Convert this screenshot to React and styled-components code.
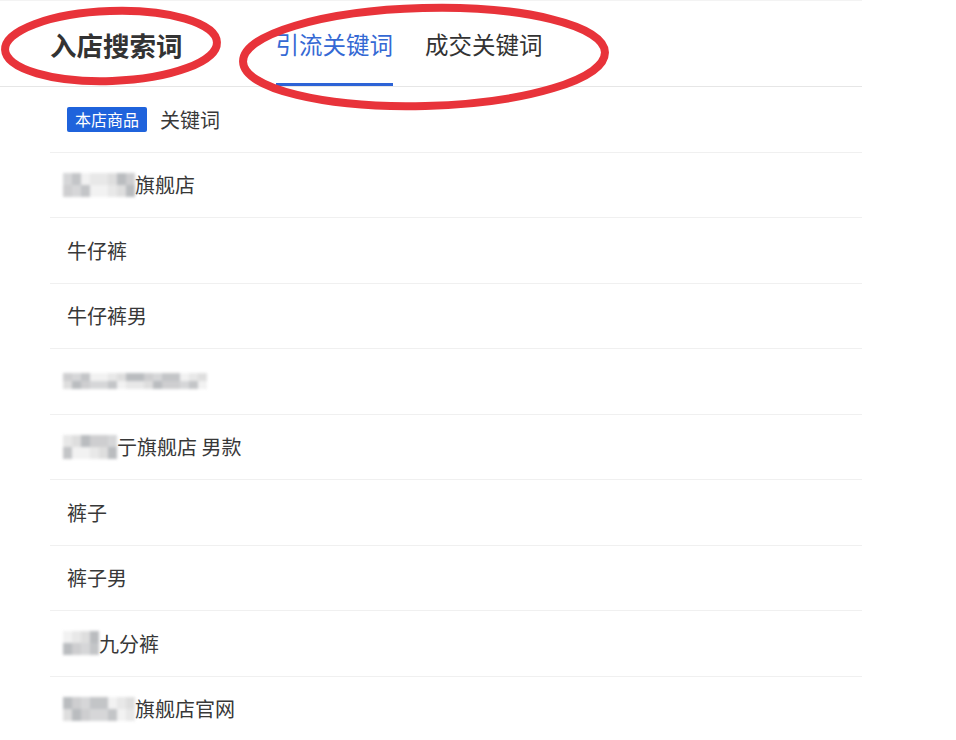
import React from 'react'
import styled, { createGlobalStyle } from 'styled-components'

const GlobalStyle = createGlobalStyle`
  html, body {
    margin: 0;
    padding: 0;
    background: #fff;
  }
  body {
    font-family: "Noto Sans CJK SC", "Noto Sans", sans-serif;
    color: #333;
  }
`

const Page = styled.div`
  position: relative;
  width: 862px;
  height: 740px;
  overflow: hidden;
  border-top: 1px solid #f3f3f3;
  box-sizing: border-box;
`

const Header = styled.header`
  display: flex;
  align-items: stretch;
  height: 85px;
  padding-left: 50px;
  border-bottom: 1px solid #e6e6e6;
`

const Title = styled.h1`
  margin: 2px 0 0;
  align-self: center;
  font-size: 26.5px;
  font-weight: 700;
  color: #333;
`

const Tabs = styled.nav`
  display: flex;
  gap: 32px;
  margin-left: 93px;
`

const Tab = styled.div`
  display: flex;
  align-items: center;
  padding-top: 4px;
  font-size: 23.5px;
  color: ${p => (p.active ? '#3569d4' : '#333')};
  border-bottom: 3px solid ${p => (p.active ? '#2d63d6' : 'transparent')};
  box-sizing: border-box;
`

const List = styled.ul`
  list-style: none;
  margin: 0;
  padding: 0 0 0 50px;
`

const Row = styled.li`
  display: flex;
  align-items: center;
  gap: 13px;
  height: 65.5px;
  box-sizing: border-box;
  padding-left: 17px;
  border-bottom: 1px solid #f0f0f0;
  font-size: 20px;
  color: #383838;
`

const Badge = styled.span`
  display: inline-flex;
  align-items: center;
  height: 25px;
  padding: 0 8px;
  border-radius: 2px;
  background: #1f63dc;
  color: #fff;
  font-size: 16px;
`

const Text = styled.span`
  display: inline-flex;
  align-items: center;
`

const Mosaic = styled.span`
  display: inline-grid;
  grid-template-columns: repeat(${p => p.cols}, 9px);
  grid-auto-rows: ${p => p.cell}px;
  margin-left: -4px;
  filter: blur(1.5px);
  opacity: 0.85;
`

const Cell = styled.span`
  background: ${p => p.shade};
`

const Marks = styled.svg`
  position: absolute;
  left: 0;
  top: 0;
  pointer-events: none;
`

const shades = ['#d9d9d9', '#c6c6c8', '#b9bbbe', '#e4e4e4', '#aeb1b5', '#cfd0d2', '#f0f0f0']

const Blur = ({ cols, rows = 2, cell = 12, seed = 1 }) => {
  const cells = []
  for (let i = 0; i < cols * rows; i++) {
    cells.push(<Cell key={i} shade={shades[(i * 3 + seed * 5 + (i % 4)) % shades.length]} />)
  }
  return (
    <Mosaic cols={cols} cell={cell}>
      {cells}
    </Mosaic>
  )
}

const rows = [
  { blur: 8, text: '旗舰店', seed: 1 },
  { text: '牛仔裤' },
  { text: '牛仔裤男' },
  { blur: 16, rows: 2, cell: 8, text: '', seed: 3 },
  { blur: 6, text: '亍旗舰店 男款', seed: 2 },
  { text: '裤子' },
  { text: '裤子男' },
  { blur: 4, text: '九分裤', seed: 4 },
  { blur: 8, text: '旗舰店官网', seed: 5 },
]

export default function App() {
  return (
    <>
      <GlobalStyle />
      <Page>
        <Header>
          <Title>入店搜索词</Title>
          <Tabs>
            <Tab active>引流关键词</Tab>
            <Tab>成交关键词</Tab>
          </Tabs>
        </Header>
        <List>
          <Row>
            <Badge>本店商品</Badge>
            <Text>关键词</Text>
          </Row>
          {rows.map((r, i) => (
            <Row key={i}>
              <Text>
                {r.blur && <Blur cols={r.blur} rows={r.rows} cell={r.cell} seed={r.seed} />}
                {r.text}
              </Text>
            </Row>
          ))}
        </List>
        <Marks width="862" height="130" viewBox="0 0 862 130">
          <ellipse cx="111" cy="45" rx="106" ry="35" fill="none" stroke="#e8333a" strokeWidth="8" transform="rotate(-2 111 45)" />
          <ellipse cx="424" cy="56" rx="181" ry="49" fill="none" stroke="#e8333a" strokeWidth="8" transform="rotate(-1.5 424 56)" />
        </Marks>
      </Page>
    </>
  )
}
